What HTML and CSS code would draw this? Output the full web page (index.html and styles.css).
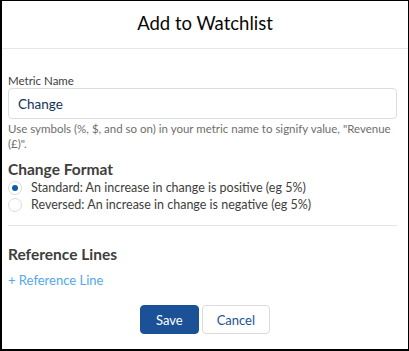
FILE: index.html
```html
<!DOCTYPE html>
<html lang="en">
  <head>
    <meta charset="UTF-8" />
    <meta name="viewport" content="width=device-width, initial-scale=1.0" />
    <title>Add to Watchlist</title>
    <link rel="stylesheet" href="styles.css">
  </head>
  <body>
    <div class="modal">
      <header class="modal-header">
        <h2>Add to Watchlist</h2>
      </header>

      <div class="modal-body">
        <label class="field-label" for="metricName">Metric Name</label>
        <input class="field-input" id="metricName" type="text" value="Change" />
        <p class="help">
          Use symbols (%, $, and so on) in your metric name to signify value, "Revenue (£)".
        </p>

        <h3 class="section-title">Change Format</h3>
        <label class="radio">
          <span class="radio-dot checked"></span>
          Standard: An increase in change is positive (eg 5%)
        </label>
        <label class="radio">
          <span class="radio-dot"></span>
          Reversed: An increase in change is negative (eg 5%)
        </label>

        <hr class="divider" />

        <h3 class="section-title">Reference Lines</h3>
        <a class="add-link" href="#">+ Reference Line</a>
      </div>

      <footer class="modal-footer">
        <button class="btn btn-brand">Save</button>
        <button class="btn btn-neutral">Cancel</button>
      </footer>
    </div>
  </body>
</html>
```

FILE: styles.css
```css
body {
  margin: 0;
  font-family: "Lato", "Open Sans", sans-serif;
  background: #fff;
}

.modal {
  box-sizing: border-box;
  width: 409px;
  height: 351px;
  border-style: solid;
  border-color: #000;
  border-width: 1px 1px 2px 2px;
  display: flex;
  flex-direction: column;
}

/* Cabecera */
.modal-header {
  box-sizing: border-box;
  height: 48px;
  padding-bottom: 4px;
  border-bottom: 1px solid #e4e7ea;
  display: flex;
  align-items: center;
  justify-content: center;
}

.modal-header h2 {
  margin: 0;
  font-size: 18.5px;
  font-weight: 400;
  color: #080707;
}

.modal-body {
  padding: 25px 11px 0 6px;
}

.field-label {
  display: block;
  font-size: 11.5px;
  line-height: 14px;
  color: #3e3e3c;
}

.field-input {
  box-sizing: border-box;
  display: block;
  width: 100%;
  height: 31px;
  margin-top: 0;
  padding: 0 9px;
  border: 1px solid #d8dde6;
  border-radius: 4px;
  font-family: inherit;
  font-size: 13.5px;
  color: #16325c;
  outline: none;
}

.help {
  margin: 2px 0 0;
  font-size: 11.5px;
  line-height: 15px;
  color: #706e6b;
}

.section-title {
  margin: 8px 0 0;
  font-size: 15.5px;
  font-weight: 700;
  line-height: 20px;
  color: #3e3e3c;
}

.radio {
  display: flex;
  align-items: center;
  gap: 9px;
  height: 17px;
  font-size: 12.5px;
  color: #3e3e3c;
}

.radio:first-of-type {
  margin-top: 4px;
}

.radio-dot {
  box-sizing: border-box;
  width: 14px;
  height: 14px;
  border: 1px solid #dddbda;
  border-radius: 50%;
  display: flex;
  align-items: center;
  justify-content: center;
}

.radio-dot.checked::after {
  content: "";
  width: 6px;
  height: 6px;
  border-radius: 50%;
  background: #0b5cab;
}

.divider {
  margin: 12px 0 0;
  border: 0;
  border-top: 1px solid #e4e7ea;
}

.modal-body .divider + .section-title {
  margin-top: 18px;
}

.add-link {
  display: inline-block;
  margin-top: 8px;
  font-size: 13px;
  color: #53a7ee;
  text-decoration: none;
}

.modal-footer {
  display: flex;
  justify-content: center;
  gap: 3px;
  padding: 17px 0 0;
}

.btn {
  box-sizing: border-box;
  height: 29px;
  padding: 0 15px;
  border-radius: 4px;
  font-family: inherit;
  font-size: 13px;
  cursor: pointer;
}

.btn-brand {
  background: #1b5297;
  border: 1px solid #1b5297;
  color: #fff;
}

.btn-neutral {
  background: #fff;
  border: 1px solid #dddbda;
  color: #1b5297;
  padding: 0 14px;
}
```
